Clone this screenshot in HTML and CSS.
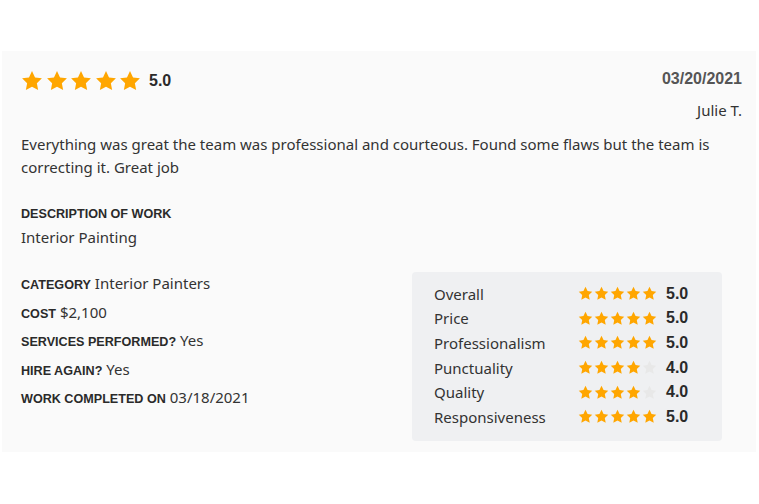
FILE: index.html
```html
<!DOCTYPE html>
<html>
<head>
<meta charset="utf-8">
<link rel="stylesheet" href="styles.css">
</head>
<body>
<svg width="0" height="0" class="defs">
  <defs>
    <symbol id="star" viewBox="0 0 24 24"><path d="M12 1.2l3.3 6.9 7.5 1-5.5 5.3 1.4 7.5L12 18.3l-6.7 3.6 1.4-7.5L1.2 9.1l7.5-1z"/></symbol>
  </defs>
</svg>
<div class="page">
  <article class="card">
    <header class="top">
      <div class="rating">
        <span class="stars big">
          <svg><use href="#star"/></svg><svg><use href="#star"/></svg><svg><use href="#star"/></svg><svg><use href="#star"/></svg><svg><use href="#star"/></svg>
        </span>
        <span class="score">5.0</span>
      </div>
      <div class="meta">
        <div class="date">03/20/2021</div>
        <div class="author">Julie T.</div>
      </div>
    </header>
    <p class="body">Everything was great the team was professional and courteous. Found some flaws but the team is correcting it. Great job</p>
    <div class="desc">
      <div class="label">DESCRIPTION OF WORK</div>
      <div class="value">Interior Painting</div>
    </div>
    <div class="bottom">
      <ul class="facts">
        <li><span class="label">CATEGORY</span> Interior Painters</li>
        <li><span class="label">COST</span> $2,100</li>
        <li><span class="label">SERVICES PERFORMED?</span> Yes</li>
        <li><span class="label">HIRE AGAIN?</span> Yes</li>
        <li><span class="label">WORK COMPLETED ON</span> 03/18/2021</li>
      </ul>
      <div class="breakdown">
        <div class="row"><span class="name">Overall</span><span class="stars small"><svg><use href="#star"/></svg><svg><use href="#star"/></svg><svg><use href="#star"/></svg><svg><use href="#star"/></svg><svg><use href="#star"/></svg></span><span class="num">5.0</span></div>
        <div class="row"><span class="name">Price</span><span class="stars small"><svg><use href="#star"/></svg><svg><use href="#star"/></svg><svg><use href="#star"/></svg><svg><use href="#star"/></svg><svg><use href="#star"/></svg></span><span class="num">5.0</span></div>
        <div class="row"><span class="name">Professionalism</span><span class="stars small"><svg><use href="#star"/></svg><svg><use href="#star"/></svg><svg><use href="#star"/></svg><svg><use href="#star"/></svg><svg><use href="#star"/></svg></span><span class="num">5.0</span></div>
        <div class="row"><span class="name">Punctuality</span><span class="stars small"><svg><use href="#star"/></svg><svg><use href="#star"/></svg><svg><use href="#star"/></svg><svg><use href="#star"/></svg><svg class="off"><use href="#star"/></svg></span><span class="num">4.0</span></div>
        <div class="row"><span class="name">Quality</span><span class="stars small"><svg><use href="#star"/></svg><svg><use href="#star"/></svg><svg><use href="#star"/></svg><svg><use href="#star"/></svg><svg class="off"><use href="#star"/></svg></span><span class="num">4.0</span></div>
        <div class="row"><span class="name">Responsiveness</span><span class="stars small"><svg><use href="#star"/></svg><svg><use href="#star"/></svg><svg><use href="#star"/></svg><svg><use href="#star"/></svg><svg><use href="#star"/></svg></span><span class="num">5.0</span></div>
      </div>
    </div>
  </article>
</div>
</body>
</html>
```

FILE: styles.css
```css
* { box-sizing: border-box; }
html, body { margin: 0; background: #fff; }
body { font-family: "Noto Sans", "Open Sans", sans-serif; color: #333; }
.defs { position: absolute; width: 0; height: 0; }
.page { padding: 51px 3px 0 2px; }
.card {
  background: #fafafa;
  height: 401px;
  padding: 18px 14px 0 19px;
}
.top { display: flex; justify-content: space-between; align-items: flex-start; }
.rating { display: flex; align-items: center; gap: 8px; padding-top: 1px; }
.stars { display: flex; fill: #ffa600; }
.stars.big { gap: 2.5px; }
.stars.big svg { width: 22px; height: 22px; }
.stars.small { gap: 1px; }
.stars.small svg { width: 15px; height: 15px; }
.stars svg.off { fill: #e8e8e8; }
.score { font-family: "Liberation Sans", Arial, sans-serif; font-weight: 700; font-size: 16px; color: #2a2a2a; }
.meta { text-align: right; }
.date { font-family: "Liberation Sans", Arial, sans-serif; font-weight: 700; font-size: 16px; color: #555; line-height: 20px; }
.author { font-size: 15px; line-height: 20px; margin-top: 11px; color: #333; }
.body { margin: 13px 0 0; font-size: 15px; line-height: 23px; color: #333; max-width: 710px; }
.desc { margin-top: 26px; }
.label { font-family: "Liberation Sans", Arial, sans-serif; font-weight: 700; font-size: 12.6px; color: #2a2a2a; }
.value { font-size: 15px; line-height: 23px; margin-top: 3px; }
.desc .label { line-height: 18px; }
.bottom { display: flex; justify-content: space-between; margin-top: 23px; padding-right: 21px; }
.facts { list-style: none; margin: 0; padding: 0; padding-top: 1px; display: flex; flex-direction: column; gap: 7px; }
.facts li { font-size: 15px; line-height: 21.5px; height: 21.5px; }
.breakdown {
  width: 310px;
  height: 169px;
  background: #eff0f2;
  border-radius: 4px;
  padding: 11px 20px 0 22px;
  display: flex; flex-direction: column; gap: 3.7px;
  margin-right: -1px;
}
.row { display: flex; align-items: center; height: 21px; font-size: 15px; }
.name { width: 144px; }
.num { font-family: "Liberation Sans", Arial, sans-serif; font-weight: 700; font-size: 16px; margin-left: 9px; color: #2a2a2a; }
```
